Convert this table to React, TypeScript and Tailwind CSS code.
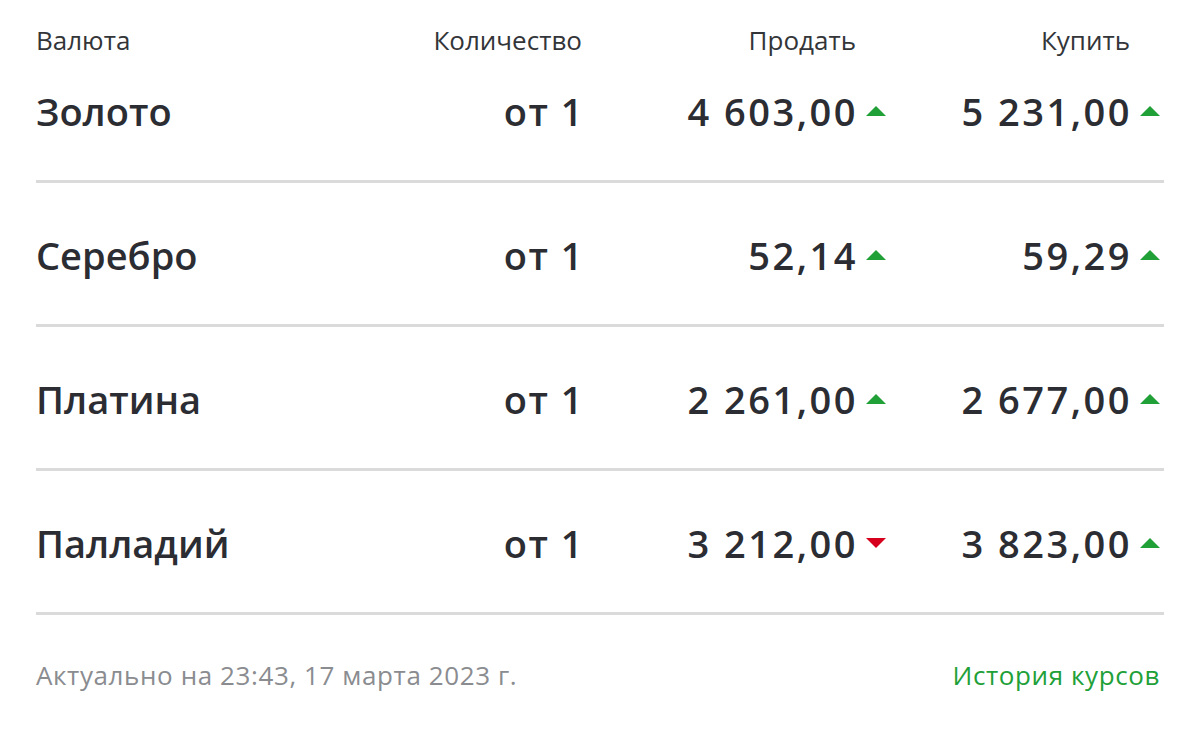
import { ReactNode } from "react";

type Dir = "up" | "down";

const rows: { name: string; qty: string; sell: string; sellDir: Dir; buy: string; buyDir: Dir }[] = [
  { name: "Золото", qty: "от 1", sell: "4 603,00", sellDir: "up", buy: "5 231,00", buyDir: "up" },
  { name: "Серебро", qty: "от 1", sell: "52,14", sellDir: "up", buy: "59,29", buyDir: "up" },
  { name: "Платина", qty: "от 1", sell: "2 261,00", sellDir: "up", buy: "2 677,00", buyDir: "up" },
  { name: "Палладий", qty: "от 1", sell: "3 212,00", sellDir: "down", buy: "3 823,00", buyDir: "up" },
];

function Arrow({ dir }: { dir: Dir }) {
  return (
    <svg width="20" height="10" viewBox="0 0 20 10" className="shrink-0" aria-hidden="true">
      {dir === "up" ? (
        <polygon points="10,0 20,10 0,10" fill="#21a038" />
      ) : (
        <polygon points="0,0 20,0 10,10" fill="#d6001c" />
      )}
    </svg>
  );
}

function Price({ value, dir }: { value: string; dir: Dir }): ReactNode {
  return (
    <div className="flex items-center justify-end gap-[8px]">
      <span className="tracking-[2.5px]">{value}</span>
      <Arrow dir={dir} />
    </div>
  );
}

export default function App() {
  return (
    <div
      className="min-h-screen bg-white text-[#2b2d33]"
      style={{ fontFamily: "'Open Sans', 'Noto Sans', sans-serif" }}
    >
      <div className="px-[36px]">
        {/* Header */}
        <div className="flex items-center h-[80px] text-[26px] text-[#333539]">
          <div className="w-[346px]">Валюта</div>
          <div className="w-[200px] text-right">Количество</div>
          <div className="w-[304px] text-right pr-[30px]">Продать</div>
          <div className="w-[274px] text-right pr-[30px]">Купить</div>
        </div>

        {/* Rows */}
        {rows.map((r) => (
          <div key={r.name}>
            <div className="flex items-center h-[62px] text-[38px] font-semibold">
              <div className="w-[346px]">{r.name}</div>
              <div className="w-[202px] text-right tracking-[1.5px]">{r.qty}</div>
              <div className="w-[302px]">
                <Price value={r.sell} dir={r.sellDir} />
              </div>
              <div className="w-[274px]">
                <Price value={r.buy} dir={r.buyDir} />
              </div>
            </div>
            <div className="h-[38px]" />
            <div className="h-[3px] bg-[#dadada]" />
            <div className="h-[41px]" />
          </div>
        ))}

        {/* Footer */}
        <div className="flex items-center justify-between text-[26px] tracking-[0.6px]">
          <span className="text-[#8a8c90]">Актуально на 23:43, 17 марта 2023 г.</span>
          <a href="#" className="text-[#21a038] mr-[4px]">
            История курсов
          </a>
        </div>
      </div>
    </div>
  );
}
